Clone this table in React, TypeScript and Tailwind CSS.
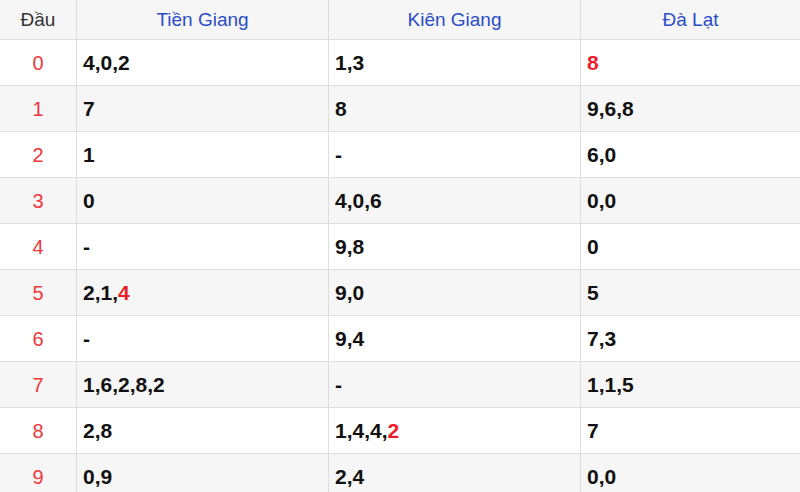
import React from 'react';

type Part = { t: string; hot?: boolean };

interface Row {
  head: string;
  cells: Part[][];
}

const p = (t: string, hot = false): Part => ({ t, hot });

const rows: Row[] = [
  { head: '0', cells: [[p('4,0,2')], [p('1,3')], [p('8', true)]] },
  { head: '1', cells: [[p('7')], [p('8')], [p('9,6,8')]] },
  { head: '2', cells: [[p('1')], [p('-')], [p('6,0')]] },
  { head: '3', cells: [[p('0')], [p('4,0,6')], [p('0,0')]] },
  { head: '4', cells: [[p('-')], [p('9,8')], [p('0')]] },
  { head: '5', cells: [[p('2,1,'), p('4', true)], [p('9,0')], [p('5')]] },
  { head: '6', cells: [[p('-')], [p('9,4')], [p('7,3')]] },
  { head: '7', cells: [[p('1,6,2,8,2')], [p('-')], [p('1,1,5')]] },
  { head: '8', cells: [[p('2,8')], [p('1,4,4,'), p('2', true)], [p('7')]] },
  { head: '9', cells: [[p('0,9')], [p('2,4')], [p('0,0')]] },
];

const provinces = ['Tiền Giang', 'Kiên Giang', 'Đà Lạt'];

export default function App() {
  return (
    <div className="w-[800px] h-[492px] overflow-hidden bg-white font-['Liberation_Sans',Arial,sans-serif]">
      <div className="grid grid-cols-[77px_252px_252px_1fr] h-[40px] bg-[#f6f6f6] border-b border-[#dedede] text-[19px]">
        <div className="flex items-center justify-center pt-[1px] text-[#333] border-r border-[#dedede]">Đầu</div>
        {provinces.map((name, i) => (
          <div
            key={name}
            className={`flex items-center justify-center pt-[1px] text-[#2a4dc6] ${i < 2 ? 'border-r border-[#dedede]' : ''}`}
          >
            {name}
          </div>
        ))}
      </div>

      {rows.map((row, idx) => (
        <div
          key={row.head}
          className={`grid grid-cols-[77px_252px_252px_1fr] h-[46px] border-b border-[#dedede] ${
            idx % 2 === 1 ? 'bg-[#f6f6f6]' : 'bg-white'
          }`}
        >
          <div className="flex items-center justify-center text-[20px] text-[#f0373c] border-r border-[#dedede]">
            {row.head}
          </div>
          {row.cells.map((cell, i) => (
            <div
              key={i}
              className={`flex items-center pl-[6px] text-[21px] font-bold text-[#111] ${
                i < 2 ? 'border-r border-[#dedede]' : ''
              }`}
            >
              {cell.map((part, j) => (
                <span key={j} className={part.hot ? 'text-[#ee1c25]' : ''}>
                  {part.t}
                </span>
              ))}
            </div>
          ))}
        </div>
      ))}
    </div>
  );
}
